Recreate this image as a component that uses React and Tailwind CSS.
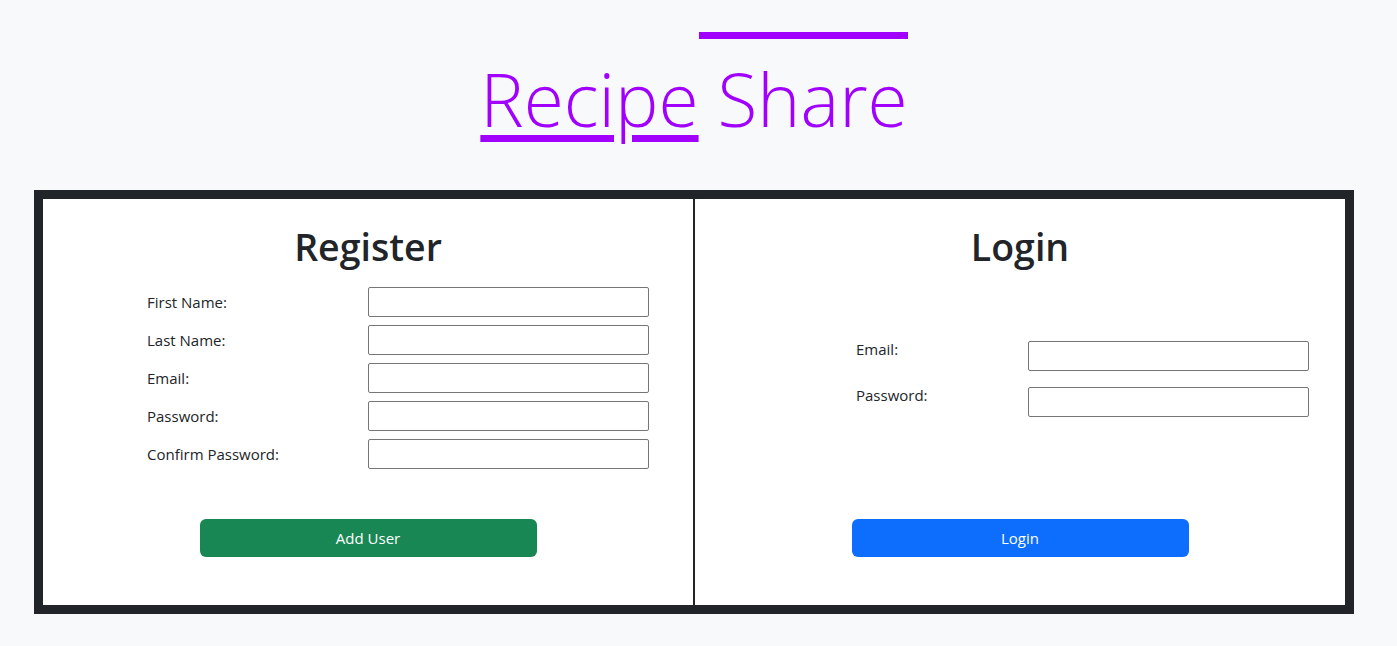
import React from 'react';

const registerFields = ['First Name:', 'Last Name:', 'Email:', 'Password:', 'Confirm Password:'];
const loginFields = ['Email:', 'Password:'];

const font = { fontFamily: '"Open Sans", "Noto Sans", sans-serif' };

export default function App() {
  return (
    <div className="min-h-screen bg-[#f8f9fa] text-[#212529]" style={font}>
      <div className="ml-[34px] w-[1320px] pt-[52px]">
        <h1 className="text-center text-[73px] font-light leading-[1.3] text-[#a100ff]">
          <a className="underline decoration-[7px] underline-offset-[8px]">Recipe</a>
          <span className="relative">
            {' '}Share
            <span className="absolute left-0 right-0 top-[-17px] h-[7px] bg-[#a100ff]" />
          </span>
        </h1>

        <div className="mt-[43px] flex border-[9px] border-[#212529] bg-white">
          {/* register */}
          <section className="flex w-[650px] flex-col pt-6 pb-12">
            <h2 className="text-center text-[37.5px] font-semibold leading-[48px]">Register</h2>
            <div className="mt-4 ml-[104px] flex flex-col gap-2">
              {registerFields.map((f) => (
                <div key={f} className="flex items-center">
                  <label className="w-[221px] text-[15px]">{f}</label>
                  <input className="h-[30px] w-[281px] rounded-[2px] border border-[#767676]" />
                </div>
              ))}
            </div>
            <button className="mx-auto mt-[50px] h-[38px] w-[337px] rounded-md bg-[#198754] text-[15px] text-white">
              Add User
            </button>
          </section>

          <div className="w-[2px] bg-[#212529]" />

          {/* login */}
          <section className="flex w-[650px] flex-col pt-6 pb-12">
            <h2 className="text-center text-[37.5px] font-semibold leading-[48px]">Login</h2>
            <div className="mt-[66px] ml-[161px] flex flex-col gap-3">
              {loginFields.map((f) => (
                <div key={f} className="flex items-start">
                  <label className="w-[172px] text-[15px] leading-6">{f}</label>
                  <input className="mt-1 h-[30px] w-[281px] rounded-[2px] border border-[#767676]" />
                </div>
              ))}
            </div>
            <button className="mx-auto mt-[102px] h-[38px] w-[337px] rounded-md bg-[#0d6efd] text-[15px] text-white">
              Login
            </button>
          </section>
        </div>
      </div>
    </div>
  );
}
